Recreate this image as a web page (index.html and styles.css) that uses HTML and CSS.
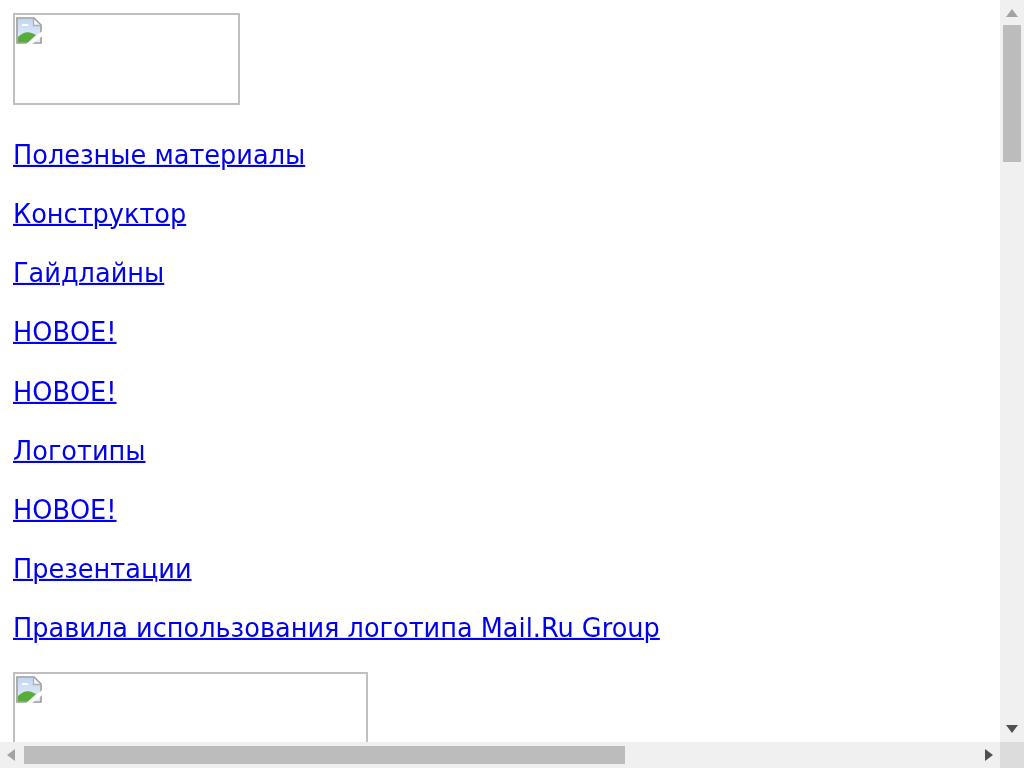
FILE: index.html
```html
<!DOCTYPE html>
<html lang="ru">
<head>
<meta charset="utf-8">
<title>Полезные материалы</title>
<link rel="stylesheet" href="styles.css">
</head>
<body>
<svg class="defs" aria-hidden="true">
  <defs>
    <linearGradient id="sky" x1="0" y1="0" x2="0" y2="1">
      <stop offset="0" stop-color="#c0d6f4"/>
      <stop offset="1" stop-color="#e6eefa"/>
    </linearGradient>
    <symbol id="broken-image" viewBox="0 0 26 27">
      <path d="M1 1H18L25 8V26H1Z" fill="#fff" stroke="#999" stroke-width="1.600"/>
      <path d="M2 2H17V9H24V25H2Z" fill="url(#sky)"/>
      <path d="M17.500 2V8.500H24.500" fill="#f6f6f6" stroke="#b0b0b0" stroke-width="1.300"/>
      <path d="M5 9q2-3 4.500-2q3-.5 3.500 2z" fill="#fff"/>
      <path d="M2 25.500V20Q8 14 14 15.500Q18 16.500 20 18L12 25.500Z" fill="#58ac3a"/>
      <path d="M9.500 27.500L27 13.500V18.500L15.500 27.500Z" fill="#fff"/>
    </symbol>
  </defs>
</svg>
<div class="window">
  <main class="viewport">
    <div class="broken broken-top">
      <svg class="broken-icon"><use href="#broken-image"/></svg>
    </div>
    <nav class="links">
      <p><a href="#">Полезные материалы</a></p>
      <p><a href="#">Конструктор</a></p>
      <p><a href="#">Гайдлайны</a></p>
      <p><a href="#">НОВОЕ!</a></p>
      <p><a href="#">НОВОЕ!</a></p>
      <p><a href="#">Логотипы</a></p>
      <p><a href="#">НОВОЕ!</a></p>
      <p><a href="#">Презентации</a></p>
      <p><a href="#">Правила использования логотипа Mail.Ru Group</a></p>
    </nav>
    <div class="broken broken-bottom">
      <svg class="broken-icon"><use href="#broken-image"/></svg>
    </div>
  </main>
  <div class="scroll-v">
    <svg class="arrow" viewBox="0 0 12 8"><path d="M6 0L12 8H0Z" fill="#a3a3a3"/></svg>
    <div class="thumb-v"></div>
    <svg class="arrow arrow-end" viewBox="0 0 12 8"><path d="M6 8L12 0H0Z" fill="#505050"/></svg>
  </div>
  <div class="scroll-h">
    <svg class="arrow-h" viewBox="0 0 8 12"><path d="M0 6L8 0V12Z" fill="#a3a3a3"/></svg>
    <div class="thumb-h"></div>
    <svg class="arrow-h arrow-end" viewBox="0 0 8 12"><path d="M8 6L0 0V12Z" fill="#505050"/></svg>
  </div>
  <div class="corner"></div>
</div>
</body>
</html>
```
FILE: styles.css
```css
html, body {
  margin: 0;
  padding: 0;
  height: 100%;
  background: #fff;
}
.defs {
  display: block;
  width: 0;
  height: 0;
}
.window {
  display: grid;
  grid-template-columns: 1000px 24px;
  grid-template-rows: 742px 26px;
  width: 1024px;
  height: 768px;
  overflow: hidden;
}
.viewport {
  overflow: hidden;
  padding: 13px 0 0 13px;
  box-sizing: border-box;
  font-family: "DejaVu Sans", sans-serif;
  font-size: 25.600px;
  filter: blur(0.3px);
}
.broken {
  box-sizing: border-box;
  border: 2px solid #c0c0c0;
  padding: 2px 1px;
}
.broken-top {
  width: 227px;
  height: 92px;
}
.broken-bottom {
  width: 355px;
  height: 120px;
  margin-top: 29px;
}
.broken-icon {
  display: block;
  width: 26px;
  height: 27px;
}
.links {
  margin-top: 35px;
}
.links p {
  margin: 0 0 29.125px;
  height: 30px;
  line-height: 30px;
}
.links a {
  display: inline-block;
  color: #0000ee;
  text-decoration-thickness: 2px;
  transform: translateY(-0.5px) scaleY(1.04);
}
.scroll-v {
  background: #f0f0f0;
  display: flex;
  flex-direction: column;
  align-items: center;
  padding: 9px 0;
  box-sizing: border-box;
}
.thumb-v {
  width: 18px;
  height: 137px;
  margin-top: 8px;
  background: #bcbcbc;
}
.arrow {
  width: 12px;
  height: 8px;
  flex: none;
}
.scroll-v .arrow-end {
  margin: auto 0 0;
}
.scroll-h {
  background: #f0f0f0;
  display: flex;
  align-items: center;
  padding: 0 7px;
  box-sizing: border-box;
}
.thumb-h {
  width: 601px;
  height: 18px;
  margin-left: 9px;
  background: #bcbcbc;
}
.arrow-h {
  width: 8px;
  height: 12px;
  flex: none;
}
.scroll-h .arrow-end {
  margin-left: auto;
}
.corner {
  background: #dcdcdc;
}
```
